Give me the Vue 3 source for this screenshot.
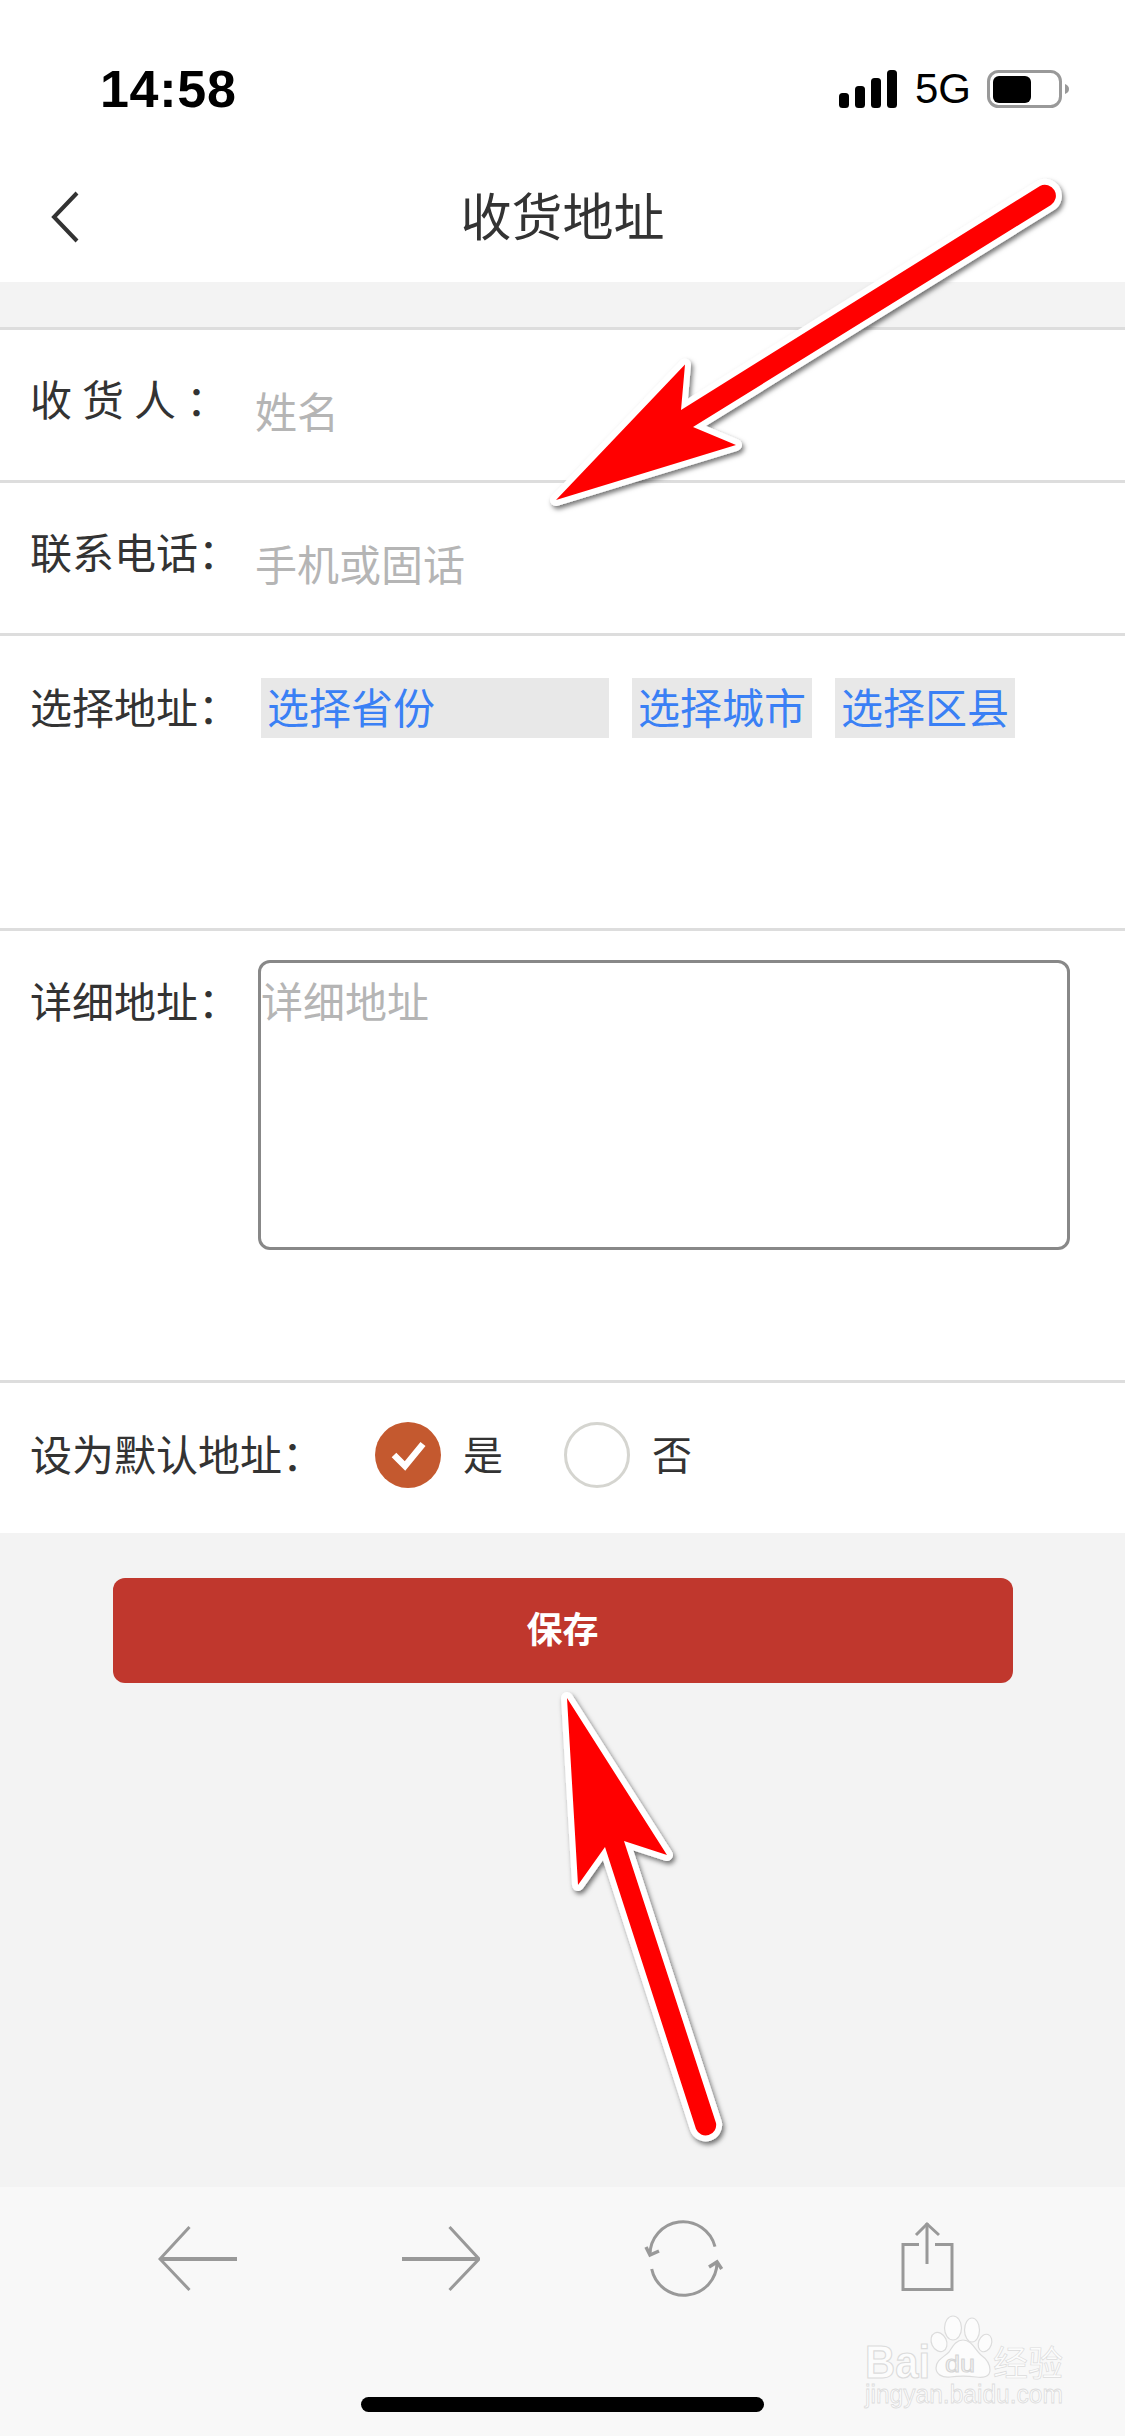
<script setup>
import { ref } from 'vue';

const chips = [
  { text: '选择省份', width: 348 },
  { text: '选择城市', width: 180 },
  { text: '选择区县', width: 180 }
];

// default address radio
const isDefault = ref(true);
</script>

<template>
  <div class="page">
    <!-- status bar -->
    <div class="status">
      <span class="time">14:58</span>
      <div class="status-right">
        <svg class="signal" width="58" height="38" viewBox="0 0 58 38">
          <rect x="0" y="23" width="10" height="15" rx="3.5" />
          <rect x="16" y="16" width="10" height="22" rx="3.5" />
          <rect x="32" y="8" width="10" height="30" rx="3.5" />
          <rect x="48" y="0" width="10" height="38" rx="3.5" />
        </svg>
        <span class="net">5G</span>
        <svg class="battery" width="82" height="38" viewBox="0 0 82 38">
          <rect x="1.5" y="1.5" width="72" height="35" rx="10" fill="none" stroke="#999" stroke-width="3" />
          <rect x="6" y="6" width="38" height="27" rx="6" fill="#000" />
          <path d="M78 14 C81 15 82 17 82 19 C82 21 81 23 78 24 Z" fill="#999" />
        </svg>
      </div>
    </div>

    <!-- title bar -->
    <div class="nav">
      <svg class="back" width="30" height="52" viewBox="0 0 30 52">
        <path d="M27 2 L4 26 L27 50" fill="none" stroke="#333" stroke-width="4" />
      </svg>
      <span class="title">收货地址</span>
    </div>

    <div class="form">
      <div class="row row-name">
        <span class="label spaced">收货人：</span>
        <span class="hint">姓名</span>
      </div>
      <div class="row row-name">
        <span class="label">联系电话：</span>
        <span class="hint">手机或固话</span>
      </div>
      <div class="row row-area">
        <span class="label">选择地址：</span>
        <div class="chips">
          <span v-for="c in chips" :key="c.text" class="chip" :style="{ width: c.width + 'px' }">{{ c.text }}</span>
        </div>
      </div>
      <div class="row row-detail">
        <span class="label">详细地址：</span>
        <div class="textarea">详细地址</div>
      </div>
      <div class="row row-default">
        <span class="label label-wide">设为默认地址：</span>
        <span class="radio" :class="{ on: isDefault }">
          <svg v-if="isDefault" width="66" height="66" viewBox="0 0 66 66">
            <path d="M19 33 L30 44 L48 22" fill="none" stroke="#fff" stroke-width="6.5" />
          </svg>
        </span>
        <span class="opt">是</span>
        <span class="radio" :class="{ on: !isDefault }"></span>
        <span class="opt">否</span>
      </div>
    </div>

    <button class="save">保存</button>

    <div class="spacer"></div>

    <!-- browser toolbar -->
    <div class="toolbar">
      <div class="tools">
        <svg width="80" height="80" viewBox="0 0 80 80" fill="none" stroke="#999" stroke-width="3">
          <path d="M31.5 8 L2 40 L31.5 71" />
          <path d="M2 40 H79" stroke-width="4" />
        </svg>
        <svg width="80" height="80" viewBox="0 0 80 80" fill="none" stroke="#999" stroke-width="3">
          <path d="M49.5 8 L79 40 L49.5 71" />
          <path d="M2 40 H79" stroke-width="4" />
        </svg>
        <svg width="80" height="80" viewBox="0 0 80 80" fill="none" stroke="#999" stroke-width="3">
          <path d="M71 27.7 A33 33 0 0 0 6 36" />
          <path d="M2 28 L6 36 L15 32" stroke-width="3.5" />
          <path d="M7.7 50 A33 33 0 0 0 73 43" />
          <path d="M65 48 L73 43 L77.7 50" stroke-width="3.5" />
        </svg>
        <svg width="80" height="80" viewBox="0 0 80 80" fill="none" stroke="#999" stroke-width="3">
          <path d="M32 25.5 H16 V70.5 H65 V25.5 H48" />
          <path d="M40 4 V45" />
          <path d="M29 16 L40 5 L52 16" />
        </svg>
      </div>
      <div class="home-bar"></div>
    </div>

    <!-- baidu jingyan watermark -->
    <svg class="watermark" width="225" height="110" viewBox="0 0 225 110">
      <g fill="#fcfcfc" stroke="#dcdcdc" stroke-width="1.2">
        <ellipse cx="89" cy="32" rx="7.5" ry="10" transform="rotate(-25 89 32)" />
        <ellipse cx="103" cy="18" rx="8.5" ry="12" />
        <ellipse cx="122" cy="20" rx="7.5" ry="12" />
        <ellipse cx="135" cy="33" rx="6.5" ry="9" transform="rotate(20 135 33)" />
        <path d="M113 30 C122 30 125 40 131 45 C138 50 140 56 140 60 C140 67 133 68 126 67 C118 66 108 66 100 67 C92 68 86 64 86 58 C86 50 94 47 99 42 C103 36 106 30 113 30 Z" />
        <text x="15" y="68" font-size="46" font-weight="700" textLength="65" lengthAdjust="spacingAndGlyphs" class="wm-latin">Bai</text>
        <text x="143" y="66" font-size="35" stroke-width="0.7" class="wm-cjk">经验</text>
        <text x="15" y="93" font-size="26" stroke-width="0.8" textLength="198" lengthAdjust="spacingAndGlyphs" class="wm-latin">jingyan.baidu.com</text>
      </g>
      <text x="95" y="62" font-size="24" fill="#f4f4f4" stroke="#d4d4d4" stroke-width="1" textLength="30" lengthAdjust="spacingAndGlyphs" class="wm-latin">du</text>
    </svg>

    <!-- red annotation arrows drawn over the screenshot -->
    <svg class="arrows" width="1125" height="2436" viewBox="0 0 1125 2436">
      <defs>
        <filter id="arrow-shadow" x="-10%" y="-10%" width="120%" height="120%">
          <feDropShadow dx="2" dy="3" stdDeviation="2.5" flood-color="#000" flood-opacity="0.55" />
        </filter>
      </defs>
      <g fill="#ff0000" stroke="#fff" stroke-width="12" stroke-linejoin="round" paint-order="stroke" filter="url(#arrow-shadow)">
        <path d="M556 500 L685 364.5 L681 410 L1040 186 A11 11 0 0 1 1051 205 L693 427 L736 445 Z" />
        <path d="M567 1698 L667 1855 L624 1841 L716 2123 A10.5 10.5 0 0 1 696 2129 L605 1847 L578 1885 Z" />
      </g>
    </svg>
  </div>
</template>

<style scoped>
.page {
  position: relative;
  width: 1125px;
  height: 2436px;
  overflow: hidden;
  display: flex;
  flex-direction: column;
  background: #f3f3f3;
  font-family: "Noto Sans CJK SC", "Liberation Sans", sans-serif;
  color: #333;
}

.status {
  height: 140px;
  box-sizing: border-box;
  padding: 38px 56px 0 100px;
  display: flex;
  justify-content: space-between;
  align-items: center;
  background: #fff;
  color: #000;
  font-family: "Liberation Sans", sans-serif;
}
.time {
  font-size: 52px;
  font-weight: 700;
  line-height: 60px;
  letter-spacing: 0.7px;
}
.status-right {
  display: flex;
  align-items: center;
}
.signal {
  fill: #000;
}
.net {
  font-size: 42px;
  line-height: 40px;
  margin-left: 18px;
  margin-right: 16px;
}

.nav {
  height: 142px;
  box-sizing: border-box;
  padding-top: 12px;
  display: grid;
  grid-template-columns: 1fr auto 1fr;
  align-items: center;
  background: #fff;
}
.back {
  margin-left: 50px;
}
.title {
  font-size: 51px;
  line-height: 60px;
  margin-bottom: 6px;
}

.form {
  margin-top: 45px;
  background: #fff;
  border-top: 3px solid #ddd;
}
.row {
  display: flex;
  box-sizing: border-box;
  padding-left: 30px;
  border-bottom: 3px solid #ddd;
  font-size: 42px;
  line-height: 60px;
}
.label {
  width: 226px;
  flex-shrink: 0;
  white-space: nowrap;
}
.spaced {
  letter-spacing: 10px;
}
.hint {
  color: #b5b5b5;
  margin-top: 12px;
  margin-left: -1px;
}
.row-name {
  height: 153px;
  padding-top: 38px;
}
.row-area {
  height: 295px;
  padding-top: 42px;
  line-height: 56px;
}
.chips {
  display: flex;
  gap: 23px;
  margin-left: 5px;
}
.chip {
  height: 60px;
  box-sizing: border-box;
  padding-left: 6px;
  background: #e8e8e8;
  color: #3a80f5;
  white-space: nowrap;
}
.row-detail {
  height: 452px;
  padding-top: 29px;
}
.row-detail .label {
  margin-top: 10px;
  width: 228px;
}
.textarea {
  width: 812px;
  height: 290px;
  box-sizing: border-box;
  padding: 7px 0 0 0;
  border: 3px solid #888;
  border-radius: 12px;
  color: #b5b5b5;
}
.row-default {
  height: 150px;
  padding-top: 39px;
  border-bottom: none;
  align-items: flex-start;
}
.label-wide {
  width: 345px;
  margin-top: 1px;
  font-size: 42px;
}
.radio {
  width: 66px;
  height: 66px;
  box-sizing: border-box;
  border-radius: 50%;
  border: 3px solid #d5d5d0;
  flex-shrink: 0;
}
.radio.on {
  border: none;
  background: #c4592f;
}
.radio svg {
  display: block;
}
.opt {
  font-size: 40px;
  margin: 1px 61px 0 22px;
}

.save {
  display: block;
  width: 900px;
  height: 105px;
  margin: 45px auto 0;
  padding: 0 0 8px;
  border: none;
  border-radius: 12px;
  background: #c0372d;
  color: #fff;
  font-family: inherit;
  font-size: 36px;
  font-weight: 700;
}
.spacer {
  flex: 1;
}

.toolbar {
  height: 249px;
  box-sizing: border-box;
  padding-top: 32px;
  display: flex;
  flex-direction: column;
  background: #f8f8f8;
}
.tools {
  display: grid;
  grid-template-columns: 242px 244px 243px 80px;
  padding-left: 158px;
}
.tools svg {
  display: block;
}
.home-bar {
  width: 403px;
  height: 15px;
  margin: 98px auto 0;
  border-radius: 8px;
  background: #000;
}

.watermark {
  position: absolute;
  left: 850px;
  top: 2310px;
}
.wm-latin {
  font-family: "Liberation Sans", sans-serif;
}
.wm-cjk {
  font-family: "Noto Sans CJK SC", sans-serif;
}
.arrows {
  position: absolute;
  left: 0;
  top: 0;
  pointer-events: none;
}
</style>
